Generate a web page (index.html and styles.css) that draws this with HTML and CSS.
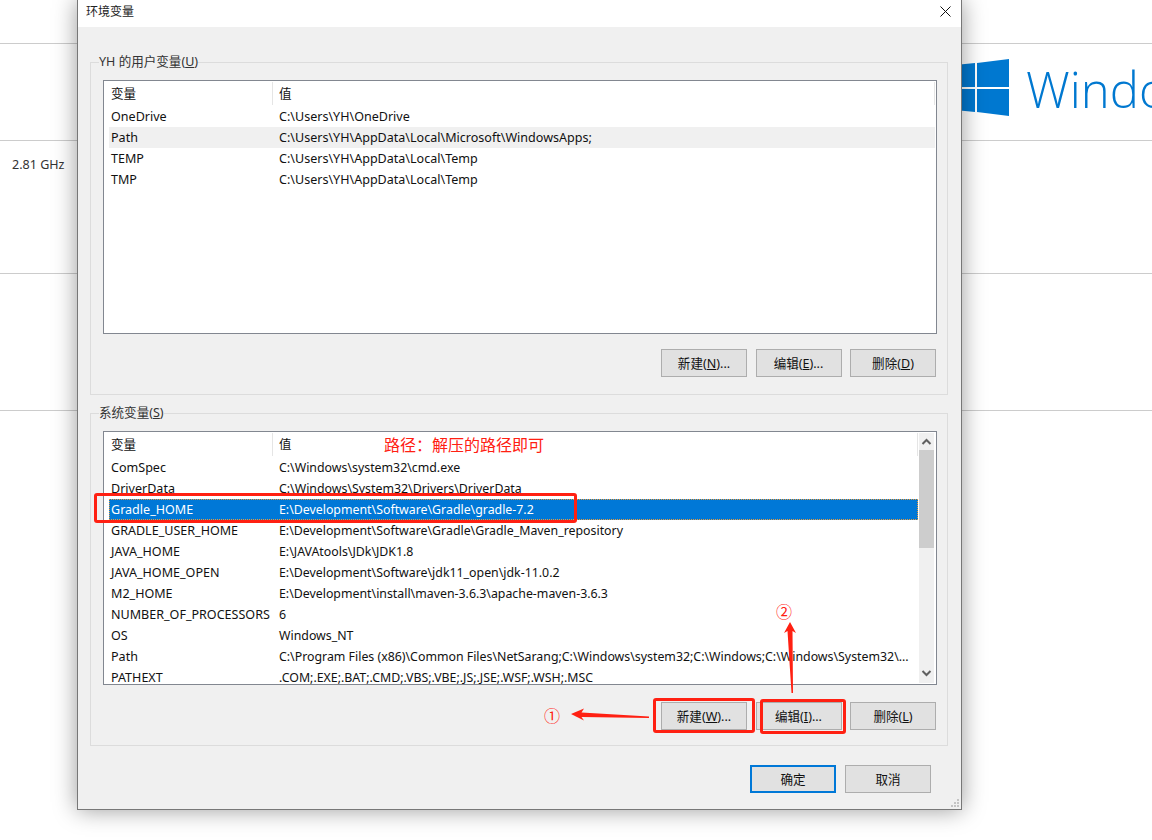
FILE: index.html
```html
<!DOCTYPE html>
<html lang="zh-CN">

<head>
  <meta charset="UTF-8">
  <title>环境变量</title>
  <link rel="stylesheet" href="styles.css">
</head>

<body>
  <div class="backdrop">
    <div class="band band-top"></div>
    <div class="band band-logo">
      <svg class="win-logo" width="54" height="58" viewBox="0 0 54 58">
        <polygon points="0,6 20,4 20,28 0,28" />
        <polygon points="22,4 54,0 54,28 22,28" />
        <polygon points="0,30 20,30 20,53 0,51" />
        <polygon points="22,30 54,30 54,57 22,53" />
      </svg>
      <span class="win-name">Windows 10</span>
    </div>
    <div class="band band-cpu">2.81 GHz</div>
    <div class="band band-ram"></div>
  </div>

  <div class="dialog">
    <div class="titlebar">
      <span class="title">环境变量</span>
      <svg class="close" width="11" height="11" viewBox="0 0 11 11">
        <path d="M0.5 0.5 L10.5 10.5 M10.5 0.5 L0.5 10.5" />
      </svg>
    </div>

    <div class="dialog-body">
      <fieldset class="group">
        <legend>YH 的用户变量(<u>U</u>)</legend>
        <div class="list">
          <div class="rows">
            <div class="row head"><span class="name">变量</span><span class="value">值</span></div>
            <div class="row"><span class="name">OneDrive</span><span class="value">C:\Users\YH\OneDrive</span></div>
            <div class="row hover"><span class="name">Path</span><span class="value">C:\Users\YH\AppData\Local\Microsoft\WindowsApps;</span></div>
            <div class="row"><span class="name">TEMP</span><span class="value">C:\Users\YH\AppData\Local\Temp</span></div>
            <div class="row"><span class="name">TMP</span><span class="value">C:\Users\YH\AppData\Local\Temp</span></div>
          </div>
        </div>
        <div class="actions">
          <button>新建(<u>N</u>)...</button>
          <button>编辑(<u>E</u>)...</button>
          <button>删除(<u>D</u>)</button>
        </div>
      </fieldset>

      <fieldset class="group group-system">
        <legend>系统变量(<u>S</u>)</legend>
        <div class="list">
          <div class="rows">
            <div class="row head"><span class="name">变量</span><span class="value">值</span></div>
            <div class="row"><span class="name">ComSpec</span><span class="value">C:\Windows\system32\cmd.exe</span></div>
            <div class="row"><span class="name">DriverData</span><span class="value">C:\Windows\System32\Drivers\DriverData</span></div>
            <div class="row selected"><span class="name">Gradle_HOME</span><span class="value">E:\Development\Software\Gradle\gradle-7.2</span></div>
            <div class="row"><span class="name">GRADLE_USER_HOME</span><span class="value">E:\Development\Software\Gradle\Gradle_Maven_repository</span></div>
            <div class="row"><span class="name">JAVA_HOME</span><span class="value">E:\JAVAtools\JDk\JDK1.8</span></div>
            <div class="row"><span class="name">JAVA_HOME_OPEN</span><span class="value">E:\Development\Software\jdk11_open\jdk-11.0.2</span></div>
            <div class="row"><span class="name">M2_HOME</span><span class="value">E:\Development\install\maven-3.6.3\apache-maven-3.6.3</span></div>
            <div class="row"><span class="name">NUMBER_OF_PROCESSORS</span><span class="value">6</span></div>
            <div class="row"><span class="name">OS</span><span class="value">Windows_NT</span></div>
            <div class="row"><span class="name">Path</span><span class="value">C:\Program Files (x86)\Common Files\NetSarang;C:\Windows\system32;C:\Windows;C:\Windows\System32\...</span></div>
            <div class="row"><span class="name">PATHEXT</span><span class="value">.COM;.EXE;.BAT;.CMD;.VBS;.VBE;.JS;.JSE;.WSF;.WSH;.MSC</span></div>
          </div>
          <div class="scrollbar">
            <svg class="arrow" width="15" height="17" viewBox="0 0 15 17"><path d="M3.5 11 L7.5 7 L11.5 11" /></svg>
            <div class="track"><div class="thumb"></div></div>
            <svg class="arrow" width="15" height="19" viewBox="0 0 15 19"><path d="M3.5 7 L7.5 11 L11.5 7" /></svg>
          </div>
        </div>
        <div class="actions">
          <button>新建(<u>W</u>)...</button>
          <button>编辑(<u>I</u>)...</button>
          <button>删除(<u>L</u>)</button>
        </div>
      </fieldset>

      <div class="footer">
        <button class="default">确定</button>
        <button>取消</button>
      </div>
    </div>

    <svg class="grip" width="10" height="10" viewBox="0 0 10 10">
      <rect x="7" y="1" width="2" height="2" />
      <rect x="4" y="4" width="2" height="2" />
      <rect x="7" y="4" width="2" height="2" />
      <rect x="1" y="7" width="2" height="2" />
      <rect x="4" y="7" width="2" height="2" />
      <rect x="7" y="7" width="2" height="2" />
    </svg>
  </div>

  <!-- red annotations drawn over the screenshot -->
  <div class="mark mark-gradle"></div>
  <div class="mark mark-new"></div>
  <div class="mark mark-edit"></div>
  <div class="note note-path">路径&#xFF1A;解压的路径即可</div>
  <div class="note note-one">①</div>
  <div class="note note-two">②</div>
  <svg class="arrows" width="1152" height="840" viewBox="0 0 1152 840">
    <polygon points="571,714 584,708.5 581.5,712.5 649,716.5 649,718 581.5,717 584,720.5" />
    <polygon points="790,622 796,633 792.5,631 793,693 791.5,693 787.5,631 784,633" />
  </svg>
</body>

</html>
```

FILE: styles.css
```css
* {
  box-sizing: border-box;
}

html,
body {
  margin: 0;
  padding: 0;
  width: 1152px;
  height: 840px;
  overflow: hidden;
}

body {
  position: relative;
  background-color: #fff;
  color: #111;
  font-family: "Noto Sans", "Noto Sans CJK SC", sans-serif;
  font-size: 12.55px;
}

/* settings page behind the dialog */
.backdrop {
  display: flex;
  flex-direction: column;
}

.band {
  border-bottom: 1px solid #ccc;
}

.band-top {
  height: 44px;
}

.band-logo {
  display: flex;
  align-items: flex-start;
  height: 97px;
  padding: 15px 0 0 955px;
  white-space: nowrap;
}

.win-logo {
  flex: none;
  fill: #0078d0;
}

.win-name {
  margin: -3px 0 0 17px;
  color: #0078d0;
  font-family: "Open Sans", sans-serif;
  font-size: 49px;
  font-weight: 300;
  line-height: 66px;
}

.band-cpu {
  height: 133px;
  padding: 15px 0 0 12px;
  color: #333;
}

.band-ram {
  height: 137px;
}

/* dialog window */
.dialog {
  position: absolute;
  left: 77px;
  top: 0;
  width: 885px;
  height: 810px;
  background-color: #f0f0f0;
  border: 1px solid #777;
  border-top: none;
  box-shadow: 0 0 22px rgba(0, 0, 0, 0.4);
}

.titlebar {
  display: flex;
  justify-content: space-between;
  align-items: center;
  height: 27px;
  padding: 0 10px 5px 8px;
  background-color: #fff;
}

.title {
  margin-top: -2px;
  color: #222;
  font-family: "Noto Sans CJK SC", sans-serif;
  font-size: 12px;
}

.close {
  fill: none;
  stroke: #111;
  stroke-width: 1;
}

.dialog-body {
  padding: 27px 13px 0 12px;
}

.group {
  margin: 0;
  padding: 10px 10px 17px 12px;
  min-width: 0;
  border: 1px solid #dcdcdc;
}

.group legend {
  margin-left: -4px;
  padding: 0;
  height: 16px;
  line-height: 16px;
  color: #333;
}

.group-system {
  margin-top: 10px;
  padding-bottom: 15px;
}

.list {
  display: flex;
  height: 254px;
  padding: 1px;
  background-color: #fff;
  border: 1px solid #828790;
  overflow: hidden;
}

.rows {
  flex: 1;
  min-width: 0;
  padding: 0 0 0 4px;
}

.row {
  display: flex;
  height: 21px;
  line-height: 21px;
  white-space: nowrap;
}

.row .name {
  flex: none;
  width: 170px;
  padding-left: 2px;
}

.group-system .row .value {
  font-size: 12.35px;
}

.row.head {
  height: 24px;
  line-height: 23px;
  background: linear-gradient(#e5e5e5, #e5e5e5) 163px 0 / 1px 23px no-repeat,
    linear-gradient(#e5e5e5, #e5e5e5) right 0 top 0 / 1px 23px no-repeat;
}

.row.hover {
  background-color: #f0f0f0;
}

.row.selected {
  background-color: #0078d7;
  color: #fff;
  outline: 1px dotted #e89a3c;
  outline-offset: -1px;
}

.scrollbar {
  display: flex;
  flex: none;
  flex-direction: column;
  width: 15px;
  margin: 0 1px;
  background-color: #f0f0f0;
}

.arrow {
  flex: none;
  fill: none;
  stroke: #606060;
  stroke-width: 2;
}

.track {
  flex: 1;
}

.thumb {
  height: 98px;
  background-color: #cdcdcd;
}

.actions {
  display: flex;
  justify-content: flex-end;
  gap: 8.5px;
  margin: 15px 1px 0 0;
}

.group-system .actions {
  margin-top: 17px;
}

button {
  width: 86px;
  height: 28px;
  padding: 0 0 2px;
  background-color: #e1e1e1;
  border: 1px solid #adadad;
  color: #111;
  font-family: "Noto Sans", "Noto Sans CJK SC", sans-serif;
  font-size: 12.55px;
}

.footer {
  display: flex;
  justify-content: flex-end;
  gap: 9px;
  margin: 19px 17px 0 0;
}

.footer .default {
  border: 2px solid #0078d7;
}

.grip {
  position: absolute;
  right: 1px;
  bottom: 1px;
  fill: #c4c4c4;
}

/* annotations */
.mark {
  position: absolute;
  border: 3px solid #ff2012;
  border-radius: 3px;
}

.mark-gradle {
  left: 94px;
  top: 493px;
  width: 483px;
  height: 30px;
}

.mark-new {
  left: 653px;
  top: 698px;
  width: 102px;
  height: 35px;
}

.mark-edit {
  left: 760px;
  top: 699px;
  width: 86px;
  height: 35px;
}

.note {
  position: absolute;
  color: #ff2012;
  font-family: "Noto Sans CJK SC", sans-serif;
  font-size: 16px;
  line-height: 20px;
  white-space: nowrap;
}

.note-path {
  left: 384px;
  top: 434px;
}

.note-one {
  left: 544px;
  top: 705px;
}

.note-two {
  left: 776px;
  top: 601px;
}

.arrows {
  position: absolute;
  left: 0;
  top: 0;
  fill: #ff2012;
}
```
